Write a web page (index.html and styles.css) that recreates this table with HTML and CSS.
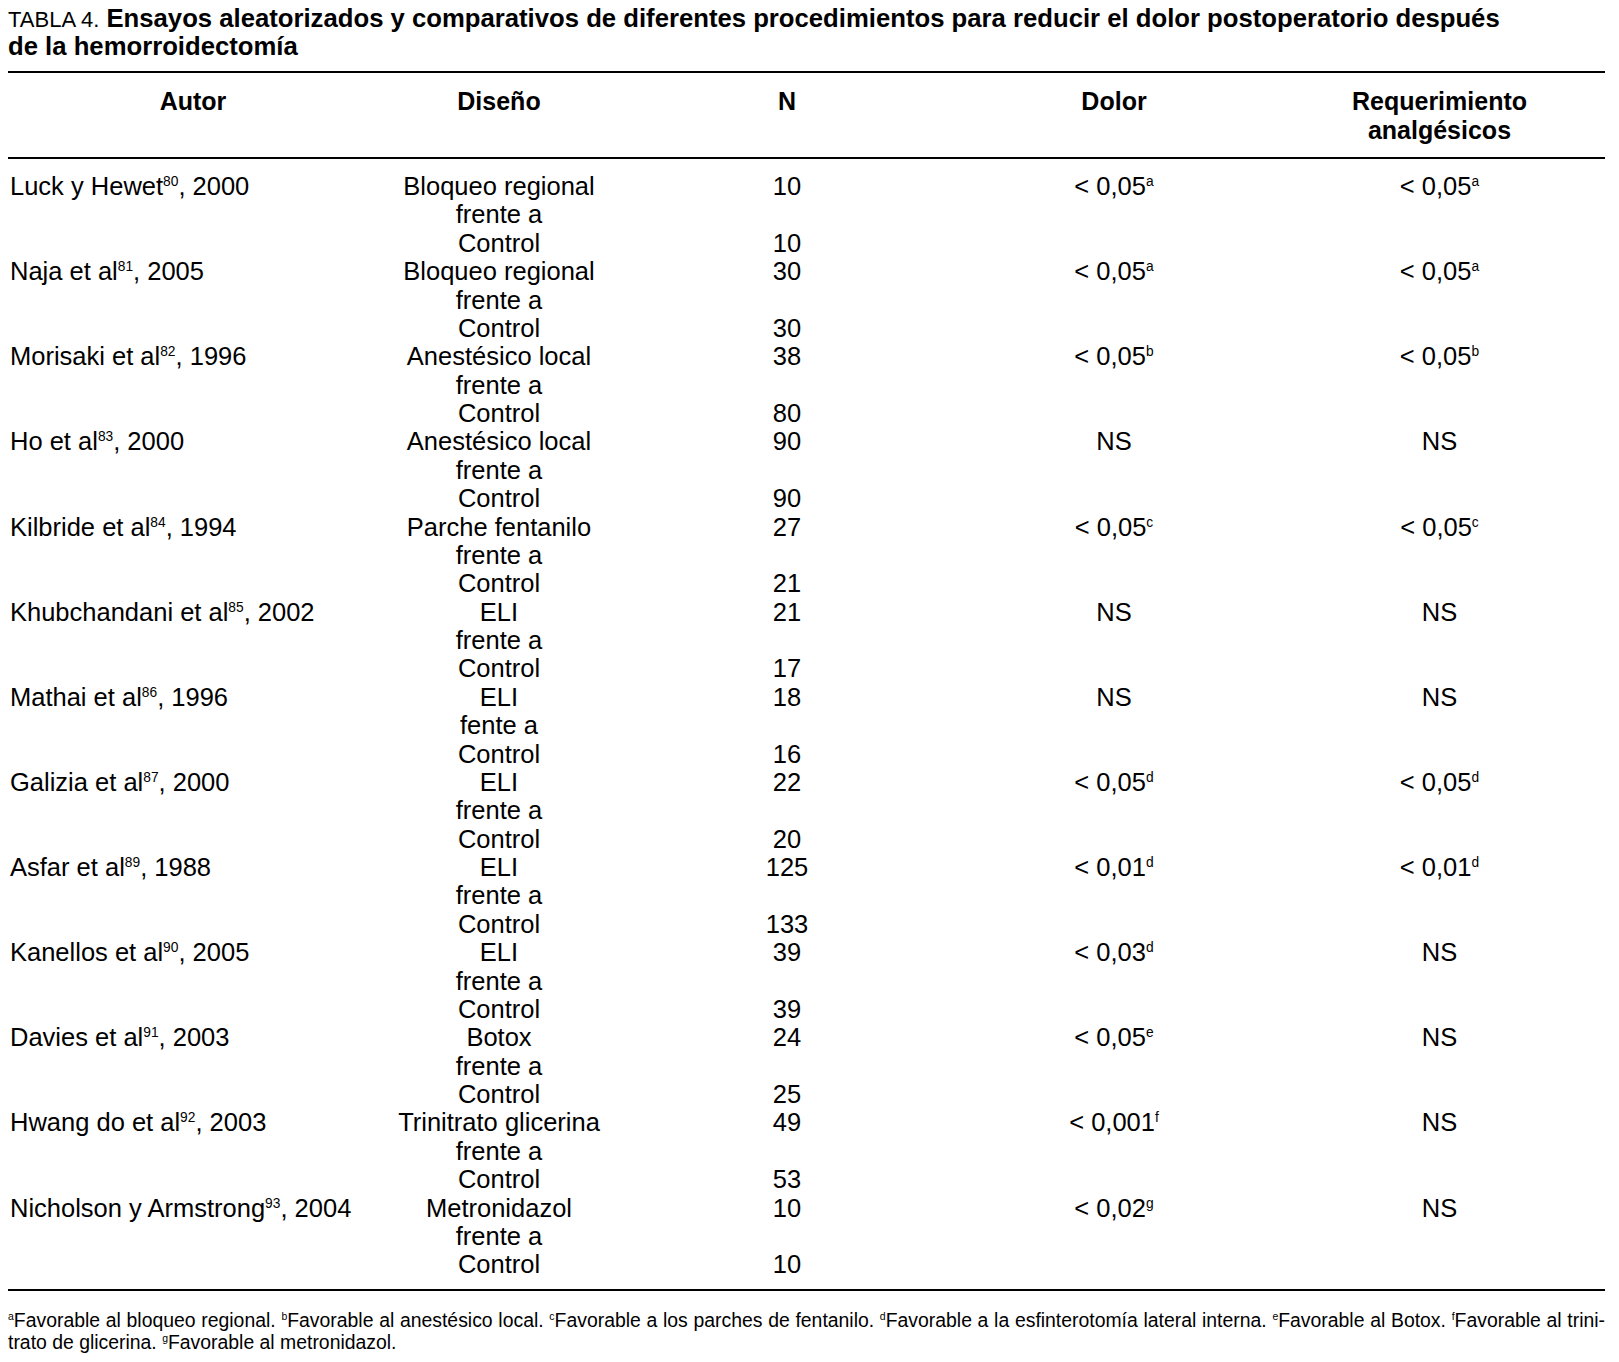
FILE: index.html
```html
<!DOCTYPE html>
<html lang="es">
<head>
<meta charset="utf-8">
<title>Tabla 4</title>
<link rel="stylesheet" href="styles.css">
</head>
<body>
<div class="page">
  <h1 class="caption"><span class="label">TABLA 4.</span> <span class="caption-text">Ensayos aleatorizados y comparativos de diferentes procedimientos para reducir el dolor postoperatorio después<br>de la hemorroidectomía</span></h1>
  <table class="trials">
    <colgroup>
      <col class="c-autor"><col class="c-diseno"><col class="c-n"><col class="c-dolor"><col class="c-req">
    </colgroup>
    <thead>
      <tr>
        <th>Autor</th><th>Diseño</th><th>N</th><th>Dolor</th><th>Requerimiento<br>analgésicos</th>
      </tr>
    </thead>
    <tbody>
      <tr>
        <td class="autor">Luck y Hewet<sup>80</sup>, 2000</td>
        <td><div>Bloqueo regional</div><div>frente a</div><div>Control</div></td>
        <td><div>10</div><div>&nbsp;</div><div>10</div></td>
        <td>&lt; 0,05<sup>a</sup></td>
        <td>&lt; 0,05<sup>a</sup></td>
      </tr>
      <tr>
        <td class="autor">Naja et al<sup>81</sup>, 2005</td>
        <td><div>Bloqueo regional</div><div>frente a</div><div>Control</div></td>
        <td><div>30</div><div>&nbsp;</div><div>30</div></td>
        <td>&lt; 0,05<sup>a</sup></td>
        <td>&lt; 0,05<sup>a</sup></td>
      </tr>
      <tr>
        <td class="autor">Morisaki et al<sup>82</sup>, 1996</td>
        <td><div>Anestésico local</div><div>frente a</div><div>Control</div></td>
        <td><div>38</div><div>&nbsp;</div><div>80</div></td>
        <td>&lt; 0,05<sup>b</sup></td>
        <td>&lt; 0,05<sup>b</sup></td>
      </tr>
      <tr>
        <td class="autor">Ho et al<sup>83</sup>, 2000</td>
        <td><div>Anestésico local</div><div>frente a</div><div>Control</div></td>
        <td><div>90</div><div>&nbsp;</div><div>90</div></td>
        <td>NS</td>
        <td>NS</td>
      </tr>
      <tr>
        <td class="autor">Kilbride et al<sup>84</sup>, 1994</td>
        <td><div>Parche fentanilo</div><div>frente a</div><div>Control</div></td>
        <td><div>27</div><div>&nbsp;</div><div>21</div></td>
        <td>&lt; 0,05<sup>c</sup></td>
        <td>&lt; 0,05<sup>c</sup></td>
      </tr>
      <tr>
        <td class="autor">Khubchandani et al<sup>85</sup>, 2002</td>
        <td><div>ELI</div><div>frente a</div><div>Control</div></td>
        <td><div>21</div><div>&nbsp;</div><div>17</div></td>
        <td>NS</td>
        <td>NS</td>
      </tr>
      <tr>
        <td class="autor">Mathai et al<sup>86</sup>, 1996</td>
        <td><div>ELI</div><div>fente a</div><div>Control</div></td>
        <td><div>18</div><div>&nbsp;</div><div>16</div></td>
        <td>NS</td>
        <td>NS</td>
      </tr>
      <tr>
        <td class="autor">Galizia et al<sup>87</sup>, 2000</td>
        <td><div>ELI</div><div>frente a</div><div>Control</div></td>
        <td><div>22</div><div>&nbsp;</div><div>20</div></td>
        <td>&lt; 0,05<sup>d</sup></td>
        <td>&lt; 0,05<sup>d</sup></td>
      </tr>
      <tr>
        <td class="autor">Asfar et al<sup>89</sup>, 1988</td>
        <td><div>ELI</div><div>frente a</div><div>Control</div></td>
        <td><div>125</div><div>&nbsp;</div><div>133</div></td>
        <td>&lt; 0,01<sup>d</sup></td>
        <td>&lt; 0,01<sup>d</sup></td>
      </tr>
      <tr>
        <td class="autor">Kanellos et al<sup>90</sup>, 2005</td>
        <td><div>ELI</div><div>frente a</div><div>Control</div></td>
        <td><div>39</div><div>&nbsp;</div><div>39</div></td>
        <td>&lt; 0,03<sup>d</sup></td>
        <td>NS</td>
      </tr>
      <tr>
        <td class="autor">Davies et al<sup>91</sup>, 2003</td>
        <td><div>Botox</div><div>frente a</div><div>Control</div></td>
        <td><div>24</div><div>&nbsp;</div><div>25</div></td>
        <td>&lt; 0,05<sup>e</sup></td>
        <td>NS</td>
      </tr>
      <tr>
        <td class="autor">Hwang do et al<sup>92</sup>, 2003</td>
        <td><div>Trinitrato glicerina</div><div>frente a</div><div>Control</div></td>
        <td><div>49</div><div>&nbsp;</div><div>53</div></td>
        <td>&lt; 0,001<sup>f</sup></td>
        <td>NS</td>
      </tr>
      <tr>
        <td class="autor">Nicholson y Armstrong<sup>93</sup>, 2004</td>
        <td><div>Metronidazol</div><div>frente a</div><div>Control</div></td>
        <td><div>10</div><div>&nbsp;</div><div>10</div></td>
        <td>&lt; 0,02<sup>g</sup></td>
        <td>NS</td>
      </tr>
    </tbody>
  </table>
  <div class="notes">
    <p class="note-line first"><sup>a</sup>Favorable al bloqueo regional. <sup>b</sup>Favorable al anestésico local. <sup>c</sup>Favorable a los parches de fentanilo. <sup>d</sup>Favorable a la esfinterotomía lateral interna. <sup>e</sup>Favorable al Botox. <sup>f</sup>Favorable al trini-</p>
    <p class="note-line">trato de glicerina. <sup>g</sup>Favorable al metronidazol.</p>
  </div>
</div>
</body>
</html>
```

FILE: styles.css
```css
html, body {
  margin: 0;
  padding: 0;
  background: #ffffff;
  color: #000000;
}

.page {
  width: 1597px;
  padding: 4px 14px 0 8px;
  font-family: "Liberation Sans", Arial, Helvetica, sans-serif;
}

.caption {
  margin: 0 0 11px 0;
  font-size: 25.7px;
  line-height: 28px;
  font-weight: normal;
}

.caption .label {
  font-size: 22px;
  line-height: 0;
}

.caption .caption-text {
  font-weight: bold;
}

.trials {
  width: 1597px;
  border-collapse: collapse;
  table-layout: fixed;
}

.c-autor { width: 370px; }
.c-diseno { width: 242px; }
.c-n { width: 334px; }
.c-dolor { width: 320px; }
.c-req { width: 331px; }

.trials thead tr {
  border-top: 2px solid #000;
  border-bottom: 2px solid #000;
}

.trials th {
  font-size: 25px;
  line-height: 29px;
  font-weight: bold;
  text-align: center;
  vertical-align: top;
  padding: 14px 0 12px 0;
}

.trials tbody tr:last-child {
  border-bottom: 2px solid #000;
}

.trials td {
  font-size: 25.5px;
  line-height: 28.38px;
  text-align: center;
  vertical-align: top;
  padding: 0;
}

.trials tbody tr:first-child td {
  padding-top: 13px;
}

.trials tbody tr:last-child td {
  padding-bottom: 10px;
}

.trials td.autor {
  text-align: left;
  padding-left: 2px;
}

sup {
  font-size: 0.54em;
  line-height: 0;
  vertical-align: super;
}

.notes {
  margin-top: 18px;
  font-size: 19.4px;
  line-height: 22.5px;
}

.note-line {
  margin: 0;
}

.note-line.first {
  white-space: nowrap;
  text-align: justify;
  text-align-last: justify;
}
```
